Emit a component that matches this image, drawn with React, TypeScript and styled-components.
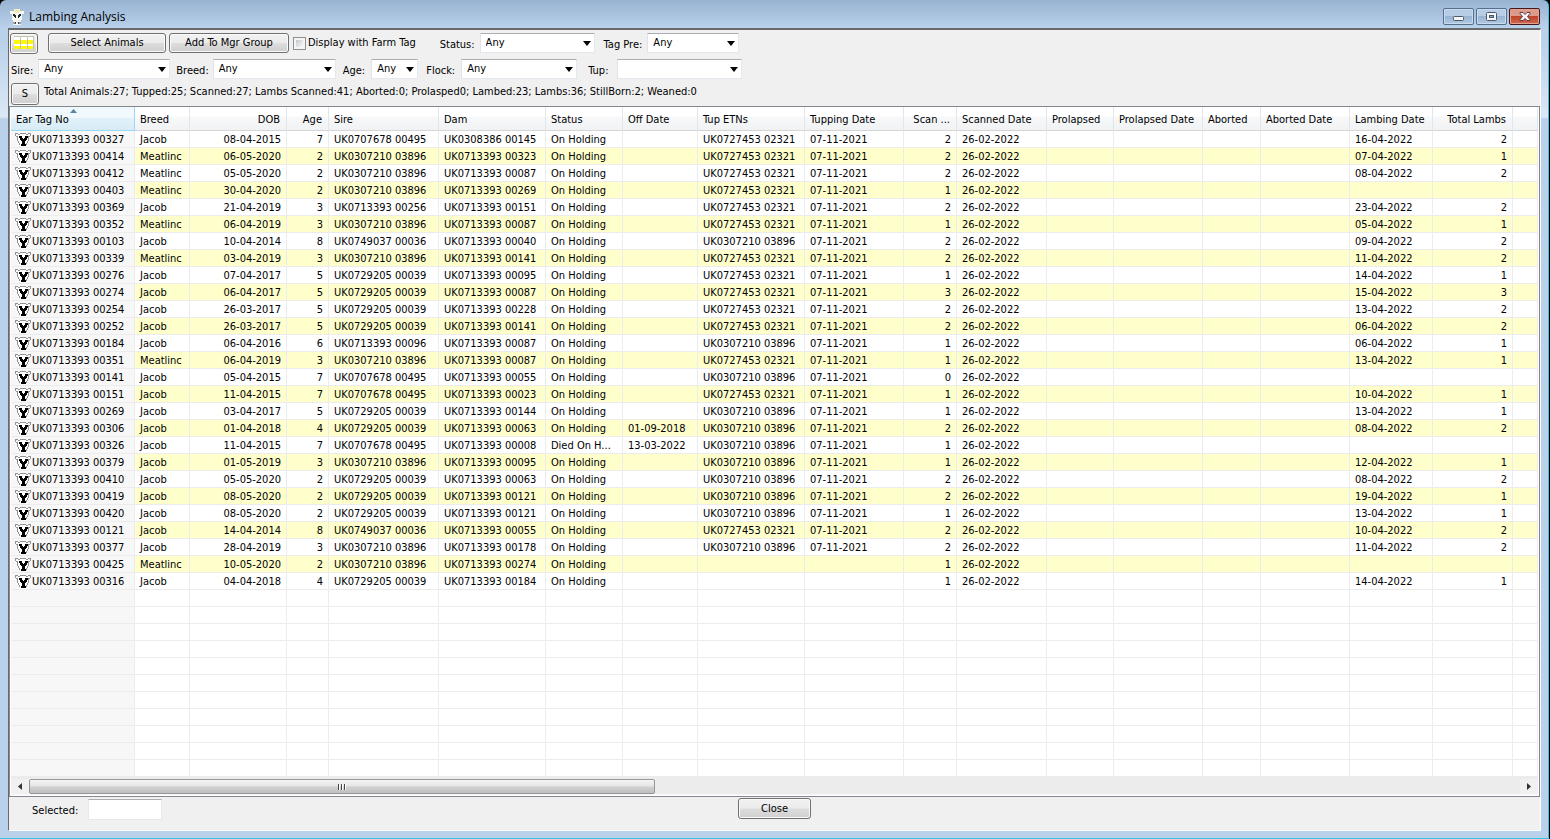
import React from "react";
import styled, { createGlobalStyle } from "styled-components";

const GlobalStyle = createGlobalStyle`
  *, *::before, *::after { box-sizing: border-box; }
  html, body, #root { height: 100%; }
  body {
    margin: 0;
    background: #000;
    color: #000;
    font: 11px/14px Tahoma, "DejaVu Sans Condensed", "Noto Sans", sans-serif;
    overflow: hidden;
  }
  button, input, select { font: inherit; color: inherit; margin: 0; }
`;

/* ---------- window frame ---------- */

const Window = styled.div`
  display: flex;
  flex-direction: column;
  height: 100vh;
  min-height: 400px;
  margin-right: 1px;
  padding: 0 7px 7px 8px;
  border-right: 1px solid #35c6e6;
  border-bottom: 1px solid #35c6e6;
  border-radius: 6px 6px 0 0;
  background: linear-gradient(#98b3d2 0, #b9d1ea 28px, #b9d1ea 40px, #dbe8f6 117px, #b9d1ea 119px);
`;

const TitleBar = styled.header`
  display: flex;
  align-items: center;
  flex: 0 0 28px;
  padding: 5px 1px 0 1px;
`;

const Title = styled.h1`
  flex: 1;
  margin: 0 0 0 4px;
  font: 12px/18px "Segoe UI", "Open Sans", "Noto Sans", sans-serif;
`;

const CaptionButtons = styled.div`
  display: flex;
  gap: 2px;
`;

const CaptionButton = styled.button<{ $danger?: boolean }>`
  display: grid;
  place-items: center;
  width: 31px;
  height: 17px;
  padding: 0;
  border: 1px solid ${(p) => (p.$danger ? "#45181c" : "#55708f")};
  border-radius: 2px;
  box-shadow: inset 0 0 0 1px ${(p) => (p.$danger ? "#e3a293" : "#c9dcef")};
  background: ${(p) =>
    p.$danger
      ? "linear-gradient(#dc9a8a 0 45%, #bd4429 50%, #cf6a50)"
      : "linear-gradient(#b7cde5 0 45%, #98b4d2 50%, #b0c9e3)"};
`;

const Client = styled.main`
  display: flex;
  flex-direction: column;
  flex: 1;
  min-height: 0;
  border: solid;
  border-width: 2px 1px 1px;
  border-color: #696969 #fff #fff #696969;
  background: #f0f0f0;
`;

/* ---------- toolbar ---------- */

const Toolbar = styled.div`
  display: flex;
  flex-direction: column;
  padding: 0 1px;
`;

const ToolRow = styled.div<{ $inset?: boolean; $h?: number }>`
  display: flex;
  align-items: center;
  height: ${(p) => p.$h ?? 26}px;
  padding-left: ${(p) => (p.$inset ? 1 : 0)}px;
  white-space: nowrap;
`;

const Button = styled.button<{ $w: number; $h?: number }>`
  display: grid;
  place-items: center;
  width: ${(p) => p.$w}px;
  height: ${(p) => p.$h ?? 20}px;
  padding: 0;
  border: 1px solid #707070;
  border-radius: 3px;
  box-shadow: inset 0 0 0 1px #fafafa;
  background: linear-gradient(#f2f2f2 0, #ebebeb 48%, #dddddd 52%, #cfcfcf);
`;

const MainButtons = styled.div`
  display: flex;
  gap: 3px;
  margin-left: 10px;
`;

const CheckLabel = styled.label`
  display: flex;
  align-items: center;
  gap: 2px;
  margin-left: 4px;
`;

const CheckBox = styled.input`
  appearance: none;
  width: 13px;
  height: 13px;
  border: 1px solid #8e8f8f;
  box-shadow: inset 0 0 0 2px #f4f4f4;
  background: linear-gradient(135deg, #b4bac2, #f4f4f4 75%);
`;

const Field = styled.div<{ $gap?: number; $space?: number }>`
  display: flex;
  align-items: center;
  gap: ${(p) => p.$gap ?? 6}px;
  margin-left: ${(p) => p.$space ?? 0}px;
`;

const FieldLabel = styled.label`
  padding-top: 3px;
`;

const SelectBox = styled.span<{ $w: number }>`
  position: relative;
  display: block;
  width: ${(p) => p.$w}px;
  height: 20px;
`;

const NativeSelect = styled.select`
  appearance: none;
  display: block;
  width: 100%;
  height: 100%;
  padding: 0 18px 0 5px;
  border: 1px solid #e3e9ef;
  border-top-color: #abadb3;
  border-left-color: #e2e3ea;
  border-radius: 0;
  background: #fff;
`;

const DropArrow = styled.svg`
  position: absolute;
  top: 8px;
  right: 4px;
  pointer-events: none;
`;

const Summary = styled.p`
  margin: 0 0 4px 5px;
`;

/* ---------- grid ---------- */

const GridPanel = styled.section`
  display: flex;
  flex-direction: column;
  flex: 1;
  min-height: 0;
  padding: 0 1px;
  border: 1px solid #828790;
  background: #fff;
`;

const GridScroll = styled.div`
  flex: 1;
  min-height: 0;
  overflow: hidden;
`;

const Table = styled.table`
  width: 100%;
  table-layout: fixed;
  border-collapse: separate;
  border-spacing: 0;
`;

const HeadCell = styled.th<{ $right?: boolean; $sorted?: boolean }>`
  position: relative;
  height: 24px;
  padding: 3px 6px 0 5px;
  overflow: hidden;
  font-weight: normal;
  text-align: ${(p) => (p.$right ? "right" : "left")};
  text-overflow: ellipsis;
  white-space: nowrap;
  border-right: 1px solid ${(p) => (p.$sorted ? "#96d9f9" : "#e2e5e9")};
  border-bottom: 1px solid ${(p) => (p.$sorted ? "#96d9f9" : "#d5d5d5")};
  background: ${(p) =>
    p.$sorted
      ? "linear-gradient(#f2f9fc 0 45%, #e1f1f9 50%, #d8ecf6)"
      : "linear-gradient(#fff 0 40%, #f7f8fa 44%, #f1f2f4)"};
`;

const SortMark = styled.svg`
  position: absolute;
  top: 2px;
  left: 59px;
`;

const Row = styled.tr<{ $alt?: boolean }>`
  background: ${(p) => (p.$alt ? "#ffffcc" : "#fff")};
`;

const Cell = styled.td<{ $right?: boolean }>`
  height: 17px;
  padding: 2px 5px 0;
  overflow: hidden;
  text-align: ${(p) => (p.$right ? "right" : "left")};
  text-overflow: ellipsis;
  white-space: nowrap;
  border-right: 1px solid #ececec;
  border-bottom: 1px solid #ececec;

  &:first-child {
    padding: 2px 0 0 4px;
    background: #f7f7f7;
  }
`;

const TagCell = styled.span`
  display: flex;
  align-items: center;
  height: 14px;
`;

const ScrollBar = styled.div`
  display: flex;
  flex: 0 0 18px;
  align-items: stretch;
  margin-bottom: 1px;
  padding-top: 2px;
  background: #ececec;
  border-bottom: 1px solid #f6f6f6;
`;

const ScrollArrow = styled.button`
  display: grid;
  place-items: center;
  width: 18px;
  padding: 0;
  border: 0;
  background: #f1f1f1;
`;

const ScrollTrack = styled.div`
  flex: 1;
`;

const ScrollThumb = styled.div`
  display: grid;
  place-items: center;
  width: 42%;
  height: 15px;
  border: 1px solid #979797;
  border-radius: 2px;
  background: linear-gradient(#f4f4f4 0, #e6e6e6 46%, #d2d2d2 52%, #bfbfc1);
`;

/* ---------- footer ---------- */

const Footer = styled.footer`
  display: grid;
  grid-template-columns: 1fr auto 1fr;
  align-items: start;
  flex: 0 0 33px;
  padding: 1px 23px 0;
`;

const SelectedField = styled(Field)`
  padding-top: 1px;
`;

const SelectedBox = styled.input`
  width: 74px;
  height: 21px;
  padding: 0 4px;
  border: 1px solid #e3e9ef;
  border-top-color: #abadb3;
  background: #fff;
`;

/* ---------- drawings ---------- */

const SheepLogo = () => (
  <svg width="16" height="16" viewBox="0 0 16 16" shapeRendering="crispEdges" aria-hidden="true">
    <path d="M5 0h6v2h4v1h1v1h-1v1h-2v6h-1v5H4v-5H3V5H1V4H0V3h1V2h4z" fill="#f7f7f5" />
    <path d="M6 0h4v1h1v2h-1v1H6V3H5V1h1z" fill="#f4ecae" />
    <path d="M0 3h1v1H0zM15 3h1v1h-1zM1 5h2v1H1zM13 5h2v1h-2zM3 11h1v2H3zM12 11h1v2h-1z" fill="#b9c0c4" />
    <path d="M4 5h2v1h1v3H6V8H5V7H4zM10 5h2v2h-1v1h-1v1H9V6h1z" fill="#26282a" />
    <path d="M4 13h2v2H4zM10 13h2v2h-2z" fill="#9ba0a0" />
    <path d="M6 13h1v2H6zM9 13h1v2H9z" fill="#44484a" />
  </svg>
);

const SheepIcon = () => (
  <svg width="17" height="14" viewBox="0 0 17 14" shapeRendering="crispEdges" aria-hidden="true">
    <path d="M3 1h9v1h3v1h-2v5h-1v3h-1v2H5v-2H4V8H3V3H1V2h2z" fill="#fff" />
    <path
      d="M5 0h6v1H5zM3 1h2v1H3zM11 1h2v1h-2zM0 0h3v1H0zM13 0h3v1h-3zM0 1h1v2H0zM15 1h1v2h-1zM1 3h2v1H1zM13 3h2v1h-2zM2 4h1v4H2zM13 4h1v4h-1zM3 8h1v2H3zM12 8h1v2h-1zM4 10h1v2H4zM11 10h1v2h-1z"
      fill="#929292"
    />
    <path d="M4 3h3v2h1v1h1V5h1V3h3v2h-1v2h-1v1h-1v3h1v2H6v-2h1V8H6V7H5V5H4z" fill="#000" />
  </svg>
);

const GridIcon = () => (
  <svg width="20" height="15" viewBox="0 0 20 15" shapeRendering="crispEdges" aria-hidden="true">
    <path d="M0 0h20v14H0z" fill="#fff" />
    <path d="M0 4h20v4H0zM0 10h20v3H0z" fill="#fbf60a" />
    <path d="M0 0h20v1H0zM6 0h1v14H6zM13 0h1v14h-1zM19 0h1v14h-1z" fill="#c3c3ae" />
    <path d="M0 13h20v1H0z" fill="#d6d6d6" />
  </svg>
);

const MinimizeIcon = () => (
  <svg width="11" height="9" viewBox="0 0 11 9" aria-hidden="true">
    <rect x="0.5" y="4.5" width="10" height="4" rx="1" fill="#f4f6f8" stroke="#4c5868" />
  </svg>
);

const MaximizeIcon = () => (
  <svg width="11" height="9" viewBox="0 0 11 9" aria-hidden="true">
    <rect x="0.5" y="0.5" width="10" height="8" rx="1" fill="#f4f6f8" stroke="#4c5868" />
    <rect x="3.5" y="3.5" width="4" height="2" fill="#8eabc9" stroke="#4c5868" />
  </svg>
);

const CloseIcon = () => (
  <svg width="12" height="9" viewBox="0 0 12 9" aria-hidden="true">
    <path
      d="M1 .5h3l2 2 2-2h3v1L8.500 4.500 11 7.500v1H8l-2-2-2 2H1v-1L3.500 4.500 1 1.500z"
      fill="#f6f6f6"
      stroke="#5a3a40"
    />
  </svg>
);

const Arrow = ({ left }: { left?: boolean }) => (
  <svg width="4" height="7" viewBox="0 0 4 7" aria-hidden="true">
    <path d={left ? "M4 0v7L0 3.500z" : "M0 0v7l4-3.500z"} fill="#333" />
  </svg>
);

/* ---------- data ---------- */

type Column = { title: string; width?: number; right?: boolean };

const columns: Column[] = [
  { title: "Ear Tag No", width: 124 },
  { title: "Breed", width: 55 },
  { title: "DOB", width: 97, right: true },
  { title: "Age", width: 42, right: true },
  { title: "Sire", width: 110 },
  { title: "Dam", width: 107 },
  { title: "Status", width: 77 },
  { title: "Off Date", width: 75 },
  { title: "Tup ETNs", width: 107 },
  { title: "Tupping Date", width: 99 },
  { title: "Scan ...", width: 53, right: true },
  { title: "Scanned Date", width: 90 },
  { title: "Prolapsed", width: 67 },
  { title: "Prolapsed Date", width: 89 },
  { title: "Aborted", width: 58 },
  { title: "Aborted Date", width: 89 },
  { title: "Lambing Date", width: 83 },
  { title: "Total Lambs", width: 80, right: true },
  { title: "" },
];

// tag | breed | dob | age | sire | dam | status | off date | tup | scan count | lambing day-month | lambs
const source = `00327|Jacob|08-04-2015|7|0707678 00495|0308386 00145|On Holding||0727453 02321|2|16-04|2
00414|Meatlinc|06-05-2020|2|0307210 03896|0713393 00323|On Holding||0727453 02321|2|07-04|1
00412|Meatlinc|05-05-2020|2|0307210 03896|0713393 00087|On Holding||0727453 02321|2|08-04|2
00403|Meatlinc|30-04-2020|2|0307210 03896|0713393 00269|On Holding||0727453 02321|1||
00369|Jacob|21-04-2019|3|0713393 00256|0713393 00151|On Holding||0727453 02321|2|23-04|2
00352|Meatlinc|06-04-2019|3|0307210 03896|0713393 00087|On Holding||0727453 02321|1|05-04|1
00103|Jacob|10-04-2014|8|0749037 00036|0713393 00040|On Holding||0307210 03896|2|09-04|2
00339|Meatlinc|03-04-2019|3|0307210 03896|0713393 00141|On Holding||0727453 02321|2|11-04|2
00276|Jacob|07-04-2017|5|0729205 00039|0713393 00095|On Holding||0727453 02321|1|14-04|1
00274|Jacob|06-04-2017|5|0729205 00039|0713393 00087|On Holding||0727453 02321|3|15-04|3
00254|Jacob|26-03-2017|5|0729205 00039|0713393 00228|On Holding||0727453 02321|2|13-04|2
00252|Jacob|26-03-2017|5|0729205 00039|0713393 00141|On Holding||0727453 02321|2|06-04|2
00184|Jacob|06-04-2016|6|0713393 00096|0713393 00087|On Holding||0307210 03896|1|06-04|1
00351|Meatlinc|06-04-2019|3|0307210 03896|0713393 00087|On Holding||0727453 02321|1|13-04|1
00141|Jacob|05-04-2015|7|0707678 00495|0713393 00055|On Holding||0307210 03896|0||
00151|Jacob|11-04-2015|7|0707678 00495|0713393 00023|On Holding||0727453 02321|1|10-04|1
00269|Jacob|03-04-2017|5|0729205 00039|0713393 00144|On Holding||0307210 03896|1|13-04|1
00306|Jacob|01-04-2018|4|0729205 00039|0713393 00063|On Holding|01-09-2018|0307210 03896|2|08-04|2
00326|Jacob|11-04-2015|7|0707678 00495|0713393 00008|Died On H...|13-03-2022|0307210 03896|1||
00379|Jacob|01-05-2019|3|0307210 03896|0713393 00095|On Holding||0307210 03896|1|12-04|1
00410|Jacob|05-05-2020|2|0729205 00039|0713393 00063|On Holding||0307210 03896|2|08-04|2
00419|Jacob|08-05-2020|2|0729205 00039|0713393 00121|On Holding||0307210 03896|2|19-04|1
00420|Jacob|08-05-2020|2|0729205 00039|0713393 00121|On Holding||0307210 03896|1|13-04|1
00121|Jacob|14-04-2014|8|0749037 00036|0713393 00055|On Holding||0727453 02321|2|10-04|2
00377|Jacob|28-04-2019|3|0307210 03896|0713393 00178|On Holding||0307210 03896|2|11-04|2
00425|Meatlinc|10-05-2020|2|0307210 03896|0713393 00274|On Holding|||1||
00316|Jacob|04-04-2018|4|0729205 00039|0713393 00184|On Holding|||1|14-04|1`;

const rows: string[][] = source.split("\n").map((line) => {
  const [tag, breed, dob, age, sire, dam, status, off, tup, scan, lambing, lambs] = line.split("|");
  return [
    `UK0713393 ${tag}`, breed, dob, age, `UK${sire}`, `UK${dam}`, status, off,
    tup && `UK${tup}`, tup && "07-11-2021", scan, "26-02-2022",
    "", "", "", "", lambing && `${lambing}-2022`, lambs, "",
  ];
});

const spareRows = Array.from({ length: 11 }, (_, i) => i);

/* ---------- parts ---------- */

type ComboProps = { id: string; label: string; width: number; value?: string; gap?: number; space?: number };

const Combo = ({ id, label, width, value = "Any", gap, space }: ComboProps) => (
  <Field $gap={gap} $space={space}>
    <FieldLabel htmlFor={id}>{label}</FieldLabel>
    <SelectBox $w={width}>
      <NativeSelect id={id} defaultValue={value}>
        <option value={value}>{value}</option>
      </NativeSelect>
      <DropArrow width="8" height="5" viewBox="0 0 8 5" aria-hidden="true">
        <path d="M0 0h8L4 5z" fill="#000" />
      </DropArrow>
    </SelectBox>
  </Field>
);

export default function App() {
  return (
    <>
      <GlobalStyle />
      <Window>
        <TitleBar>
          <SheepLogo />
          <Title>Lambing Analysis</Title>
          <CaptionButtons>
            <CaptionButton aria-label="Minimize"><MinimizeIcon /></CaptionButton>
            <CaptionButton aria-label="Maximize"><MaximizeIcon /></CaptionButton>
            <CaptionButton aria-label="Close window" $danger><CloseIcon /></CaptionButton>
          </CaptionButtons>
        </TitleBar>

        <Client>
          <Toolbar>
            <ToolRow>
              <Button $w={28} $h={21} aria-label="Grid view"><GridIcon /></Button>
              <MainButtons>
                <Button $w={118}>Select Animals</Button>
                <Button $w={120}>Add To Mgr Group</Button>
              </MainButtons>
              <CheckLabel>
                <CheckBox type="checkbox" />
                Display with Farm Tag
              </CheckLabel>
              <Combo id="status" label="Status:" width={115} gap={5} space={24} />
              <Combo id="tagpre" label="Tag Pre:" width={92} gap={5} space={9} />
            </ToolRow>
            <ToolRow $inset>
              <Combo id="sire" label="Sire:" width={132} gap={5} />
              <Combo id="breed" label="Breed:" width={123} space={6} gap={4} />
              <Combo id="age" label="Age:" width={47} space={7} />
              <Combo id="flock" label="Flock:" width={116} space={8} />
              <Combo id="tup" label="Tup:" width={125} value="" space={11} gap={9} />
            </ToolRow>
            <ToolRow $inset $h={24}>
              <Button $w={28} $h={22}>S</Button>
              <Summary>
                Total Animals:27; Tupped:25; Scanned:27; Lambs Scanned:41; Aborted:0; Prolasped0; Lambed:23;
                Lambs:36; StillBorn:2; Weaned:0
              </Summary>
            </ToolRow>
          </Toolbar>

          <GridPanel>
            <GridScroll>
              <Table>
                <colgroup>
                  {columns.map((c, i) => (
                    <col key={i} width={c.width} />
                  ))}
                </colgroup>
                <thead>
                  <tr>
                    {columns.map((c, i) => (
                      <HeadCell key={i} $right={c.right} $sorted={i === 0} scope="col">
                        {c.title}
                        {i === 0 && (
                          <SortMark width="7" height="4" viewBox="0 0 7 4" aria-hidden="true">
                            <path d="M0 4 3.500 0 7 4z" fill="#4f86a6" />
                          </SortMark>
                        )}
                      </HeadCell>
                    ))}
                  </tr>
                </thead>
                <tbody>
                  {rows.map((row, r) => (
                    <Row key={r} $alt={r % 2 === 1}>
                      {row.map((value, i) => (
                        <Cell key={i} $right={columns[i].right}>
                          {i === 0 ? <TagCell><SheepIcon />{value}</TagCell> : value}
                        </Cell>
                      ))}
                    </Row>
                  ))}
                  {spareRows.map((r) => (
                    <Row key={r}>
                      {columns.map((_, i) => (
                        <Cell key={i} />
                      ))}
                    </Row>
                  ))}
                </tbody>
              </Table>
            </GridScroll>
            <ScrollBar>
              <ScrollArrow aria-label="Scroll left"><Arrow left /></ScrollArrow>
              <ScrollTrack>
                <ScrollThumb>
                  <svg width="8" height="6" viewBox="0 0 8 6" shapeRendering="crispEdges" aria-hidden="true">
                    <path d="M0 0h1v6H0zM3 0h1v6H3zM6 0h1v6H6z" fill="#444" />
                    <path d="M1 0h1v6H1zM4 0h1v6H4zM7 0h1v6H7z" fill="#fff" />
                  </svg>
                </ScrollThumb>
              </ScrollTrack>
              <ScrollArrow aria-label="Scroll right"><Arrow /></ScrollArrow>
            </ScrollBar>
          </GridPanel>

          <Footer>
            <SelectedField $gap={10}>
              <FieldLabel htmlFor="selected">Selected:</FieldLabel>
              <SelectedBox id="selected" />
            </SelectedField>
            <Button $w={73} $h={21}>Close</Button>
          </Footer>
        </Client>
      </Window>
    </>
  );
}
